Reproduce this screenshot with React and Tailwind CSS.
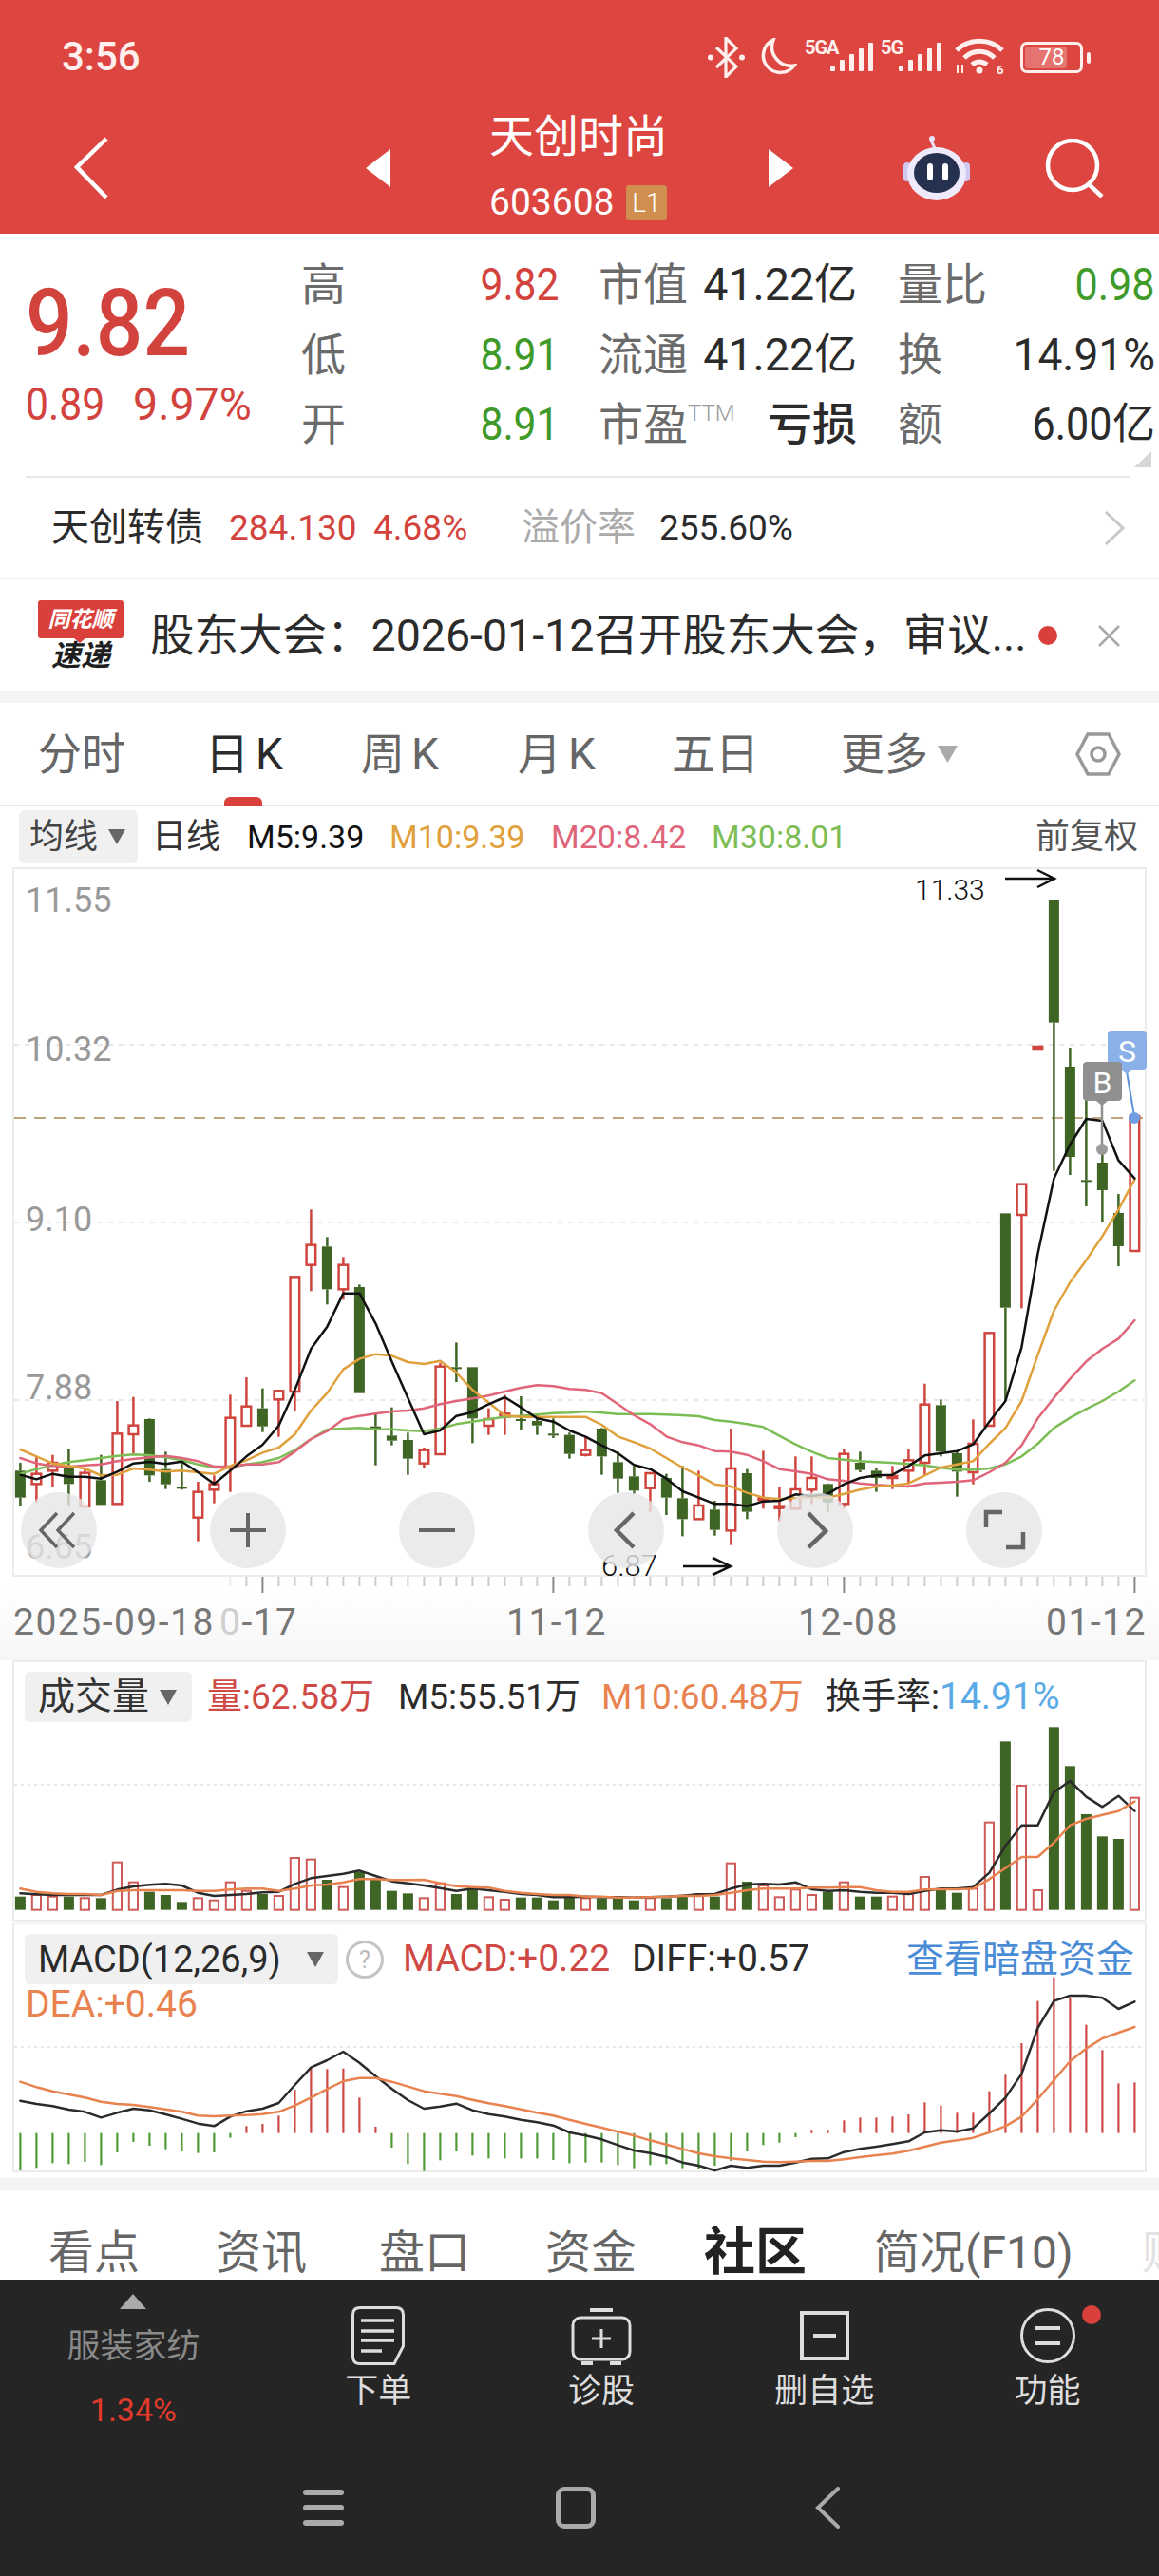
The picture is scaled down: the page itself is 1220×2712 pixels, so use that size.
import React from 'react';

const cx = (i) => 21.4 + 17 * i;
const kY = (z) => 1200 + z / 3;
const volY = (z) => 1740 + z / 3;
const macdY = (z) => 2020 + z / 3;
const pts = (arr, toY) => arr.map((z, i) => `${cx(i)},${toY(z)}`).join(' ');

const RED = '#d0443e';
const GREEN = '#3f6525';

// type, wick top, body top, body bottom, wick bottom
const candles = [
  ['g', 1020, 1045, 1130, 1155], ['r', 1000, 1055, 1087, 1145], ['r', 995, 1020, 1045, 1095], ['g', 975, 1035, 1087, 1155],
  ['r', 1040, 1052, 1158, 1158], ['g', 995, 1075, 1153, 1153], ['r', 825, 928, 1150, 1150], ['r', 812, 902, 930, 990],
  ['g', 880, 882, 1060, 1080], ['g', 985, 1040, 1088, 1103], ['g', 1020, 1096, 1100, 1105], ['r', 1080, 1112, 1193, 1268],
  ['r', 1060, 1088, 1105, 1148], ['r', 805, 878, 1035, 1112], ['r', 750, 842, 903, 903], ['g', 785, 848, 905, 923],
  ['r', 790, 793, 820, 938], ['r', 433, 433, 795, 855], ['r', 220, 332, 395, 478], ['g', 307, 337, 472, 520],
  ['r', 370, 395, 472, 505], ['g', 457, 465, 800, 800], ['g', 862, 905, 915, 1028], ['g', 845, 934, 950, 965],
  ['g', 925, 948, 1007, 1058], ['r', 972, 980, 1022, 1035], ['r', 705, 716, 993, 993], ['g', 640, 718, 722, 765],
  ['g', 718, 718, 880, 958], ['r', 848, 882, 903, 932], ['r', 805, 865, 875, 932], ['g', 810, 882, 887, 915],
  ['g', 865, 888, 902, 932], ['g', 880, 928, 934, 942], ['g', 925, 932, 992, 1007], ['r', 935, 980, 995, 1000],
  ['g', 910, 912, 1000, 1058], ['g', 985, 1018, 1070, 1115], ['g', 1030, 1063, 1108, 1120], ['r', 1050, 1053, 1100, 1175],
  ['g', 1055, 1068, 1130, 1185], ['g', 1030, 1132, 1198, 1252], ['r', 1045, 1155, 1198, 1198], ['g', 1140, 1168, 1232, 1250],
  ['r', 912, 1038, 1234, 1280], ['g', 1040, 1053, 1175, 1198], ['r', 982, 1132, 1136, 1165], ['r', 1095, 1157, 1163, 1205],
  ['r', 1000, 1104, 1165, 1165], ['r', 1000, 1068, 1105, 1150], ['g', 1085, 1087, 1145, 1175], ['r', 975, 992, 1150, 1165],
  ['g', 985, 1020, 1043, 1050], ['g', 1035, 1045, 1068, 1112], ['r', 1030, 1062, 1066, 1103], ['r', 975, 1012, 1045, 1090],
  ['r', 770, 836, 1020, 1060], ['g', 820, 838, 985, 1000], ['g', 985, 990, 1048, 1127], ['r', 883, 960, 1050, 1088],
  ['r', 610, 610, 903, 903], ['g', 232, 232, 530, 825], ['r', 140, 140, 237, 532], ['r', -294, -294, -288, -288],
  ['g', -759, -759, -370, 98], ['g', -291, -231, 54, 111], ['g', -126, 127, 131, 210], ['g', 30, 72, 159, 261],
  ['g', 171, 231, 336, 399], ['r', -75, -75, 351, 351],
];

const m5 = [1058, 1072, 1055, 1064, 1064, 1070, 1048, 1022, 1017, 1024, 1016, 1050, 1087, 1045, 1000, 963, 903, 790, 660, 590, 485, 485, 580, 700, 815, 930, 918, 872, 860, 835, 813, 845, 880, 890, 918, 938, 965, 990, 1027, 1040, 1070, 1110, 1130, 1150, 1150, 1157, 1142, 1140, 1120, 1125, 1118, 1088, 1068, 1060, 1058, 1030, 997, 990, 983, 962, 890, 825, 655, 360, 122, 15, -66, -60, 65, 122];
const m10 = [978, 1000, 1022, 1030, 1038, 1060, 1058, 1038, 1042, 1048, 1045, 1050, 1055, 1030, 1012, 988, 972, 930, 855, 800, 725, 692, 677, 682, 702, 708, 698, 735, 790, 830, 870, 875, 875, 875, 875, 875, 900, 937, 955, 975, 1005, 1035, 1060, 1088, 1095, 1115, 1130, 1135, 1132, 1128, 1130, 1118, 1105, 1095, 1092, 1085, 1060, 1035, 1025, 1015, 960, 910, 825, 680, 540, 450, 380, 304, 220, 125];
const m20 = [1005, 1022, 1030, 1033, 1028, 1025, 1015, 1008, 1003, 998, 1005, 1015, 1032, 1032, 1025, 1025, 1018, 985, 945, 920, 883, 872, 865, 858, 855, 848, 835, 825, 817, 808, 795, 783, 775, 778, 787, 790, 800, 835, 870, 898, 937, 955, 965, 983, 985, 995, 1015, 1040, 1047, 1055, 1072, 1077, 1085, 1090, 1093, 1095, 1085, 1083, 1080, 1075, 1050, 1020, 965, 880, 815, 755, 700, 660, 628, 570];
const m30 = [1055, 1040, 1028, 1018, 1012, 1005, 998, 994, 996, 1003, 1012, 1025, 1035, 1035, 1025, 1018, 1005, 980, 945, 915, 912, 910, 914, 914, 918, 920, 912, 898, 890, 882, 875, 872, 868, 863, 862, 858, 862, 866, 866, 866, 868, 870, 873, 885, 890, 898, 907, 935, 962, 985, 1005, 1010, 1015, 1018, 1020, 1024, 1028, 1036, 1042, 1042, 1038, 1025, 1000, 960, 910, 878, 850, 825, 795, 760];

const vols = [770, 765, 770, 770, 775, 775, 662, 725, 755, 765, 787, 775, 782, 725, 752, 762, 768, 648, 653, 717, 740, 692, 712, 752, 760, 775, 728, 762, 740, 772, 780, 773, 773, 782, 770, 775, 775, 775, 782, 775, 775, 765, 762, 770, 665, 723, 735, 772, 748, 765, 755, 725, 770, 770, 770, 762, 708, 750, 758, 745, 536, 280, 420, 750, 235, 358, 510, 580, 588, 458];
const volM5 = [760, 763, 765, 765, 765, 765, 748, 738, 733, 730, 735, 758, 768, 765, 762, 757, 755, 730, 712, 705, 698, 688, 705, 722, 728, 735, 743, 752, 745, 750, 755, 762, 765, 772, 772, 770, 772, 772, 773, 772, 770, 767, 763, 762, 745, 732, 730, 732, 725, 747, 752, 750, 755, 758, 758, 762, 752, 745, 745, 740, 695, 610, 545, 545, 440, 405, 455, 487, 452, 500];
const volM10 = [745, 755, 760, 762, 762, 765, 752, 750, 750, 750, 750, 752, 752, 748, 745, 745, 752, 745, 735, 732, 725, 715, 715, 718, 718, 717, 728, 737, 740, 742, 752, 758, 762, 765, 765, 770, 770, 773, 773, 772, 770, 768, 768, 765, 758, 750, 745, 745, 745, 742, 742, 740, 740, 750, 755, 755, 748, 747, 747, 745, 715, 680, 645, 645, 600, 545, 525, 512, 500, 470];

const macdBars = [795, 787, 772, 775, 768, 778, 738, 705, 717, 728, 735, 740, 738, 692, 655, 648, 622, 540, 473, 475, 473, 565, 657, 723, 775, 797, 763, 735, 748, 757, 757, 757, 757, 762, 772, 770, 770, 778, 788, 778, 775, 788, 790, 780, 765, 735, 715, 707, 690, 667, 667, 637, 628, 628, 625, 618, 580, 590, 613, 613, 545, 493, 393, 260, 185, 250, 335, 415, 520, 517];
const diff = [575, 585, 592, 603, 610, 628, 613, 600, 605, 618, 632, 647, 655, 625, 608, 600, 582, 525, 470, 447, 420, 455, 497, 537, 573, 600, 593, 584, 605, 617, 625, 635, 643, 653, 675, 685, 697, 715, 732, 740, 752, 770, 780, 795, 780, 787, 780, 780, 770, 758, 757, 737, 727, 720, 712, 703, 675, 668, 672, 662, 615, 565, 490, 345, 260, 243, 243, 250, 285, 262];
const dea = [515, 532, 545, 555, 565, 578, 585, 588, 595, 602, 610, 622, 624, 622, 620, 617, 610, 590, 565, 538, 513, 503, 503, 515, 530, 545, 553, 560, 572, 583, 592, 602, 613, 622, 635, 648, 660, 673, 685, 700, 713, 727, 741, 750, 757, 762, 767, 769, 767, 765, 765, 760, 753, 747, 742, 733, 720, 707, 700, 692, 675, 655, 625, 570, 510, 450, 410, 378, 360, 342];

const Line = ({ points, color, width = 2.5 }) => (
  <polyline points={points} fill="none" stroke={color} strokeWidth={width} strokeLinejoin="round" strokeLinecap="round" />
);

const KLineChart = () => (
  <svg width="1220" height="835" viewBox="0 913 1220 835" className="block">
    <defs>
      <linearGradient id="axisFade" x1="0" y1="0" x2="0" y2="1">
        <stop offset="0" stopColor="#ffffff" />
        <stop offset="1" stopColor="#f6f6f6" />
      </linearGradient>
    </defs>
    <rect x="0" y="1672" width="1220" height="76" fill="url(#axisFade)" />
    <rect x="14" y="914" width="1192" height="745" fill="#fff" stroke="#ececec" strokeWidth="2" />
    {[1100, 1287, 1474].map((y) => (
      <line key={y} x1="15" x2="1205" y1={y} y2={y} stroke="#e8e8e8" strokeWidth="2" strokeDasharray="5 6" />
    ))}
    <line x1="15" x2="1205" y1="1177" y2="1177" stroke="#bfa67e" strokeWidth="2" strokeDasharray="12 9" />

    <g fontSize="36" fill="#999999">
      <text x="27" y="960">11.55</text>
      <text x="27" y="1117">10.32</text>
      <text x="27" y="1296">9.10</text>
      <text x="27" y="1473">7.88</text>
      <text x="27" y="1641">6.65</text>
    </g>

    {candles.map(([type, wt, bt, bb, wb], i) => {
      const x = cx(i);
      const color = type === 'r' ? RED : GREEN;
      return (
        <g key={i}>
          {wt < bt && <line x1={x} x2={x} y1={kY(wt)} y2={kY(bt)} stroke={color} strokeWidth="2.5" />}
          {wb > bb && <line x1={x} x2={x} y1={kY(bb)} y2={kY(wb)} stroke={color} strokeWidth="2.5" />}
          {type === 'r' ? (
            <rect x={x - 4.8} y={kY(bt)} width="9.6" height={Math.max(kY(bb) - kY(bt), 2)} fill="#fff" stroke={color} strokeWidth="2.5" />
          ) : (
            <rect x={x - 5.5} y={kY(bt)} width="11" height={Math.max(kY(bb) - kY(bt), 2)} fill={color} />
          )}
        </g>
      );
    })}

    <Line points={pts(m30, kY)} color="#7cbd55" />
    <Line points={pts(m20, kY)} color="#e0657a" />
    <Line points={pts(m10, kY)} color="#e0a03c" />
    <Line points={pts(m5, kY)} color="#111111" />

    <text x="963" y="947" fontSize="30" fill="#111" fontWeight="300">11.33</text>
    <path d="M1058 925H1109M1092 916L1110 925L1092 934" fill="none" stroke="#111" strokeWidth="2.5" />
    <text x="633" y="1659" fontSize="31" fill="#111" fontWeight="300">6.87</text>
    <path d="M719 1649H768M750 1640L769 1649L750 1658" fill="none" stroke="#111" strokeWidth="2.5" />

    <line x1="1160" x2="1160" y1="1160" y2="1210" stroke="#8f8f8f" strokeWidth="2.5" />
    <circle cx="1160" cy="1210" r="6" fill="#9a9a9a" />
    <line x1="1186" x2="1194" y1="1128" y2="1175" stroke="#5f92dc" strokeWidth="2" />
    <circle cx="1194" cy="1177" r="6" fill="#6f9fe0" />
    <rect x="1166" y="1085" width="41" height="41" rx="4" fill="#8ab0ea" />
    <path d="M1180 1126h12l-6 5z" fill="#8ab0ea" />
    <text x="1186.5" y="1118" fontSize="32" fill="#fff" textAnchor="middle">S</text>
    <rect x="1140" y="1118" width="41" height="41" rx="4" fill="#8f8f8f" />
    <path d="M1154 1159h12l-6 5z" fill="#8f8f8f" />
    <text x="1160.5" y="1151" fontSize="32" fill="#fff" textAnchor="middle">B</text>

    {candles.map((_, i) => (i >= 13 ? (
      <line key={i} x1={cx(i)} x2={cx(i)} y1="1660" y2={[15, 33, 51, 69].includes(i) ? 1677 : 1670} stroke={[15, 33, 51, 69].includes(i) ? '#888' : i === 13 ? '#eee' : '#ccc'} strokeWidth="2" />
    ) : null))}

    <g fontSize="39" fill="#777777" letterSpacing="1.5">
      <text x="14" y="1721">2025-09-18</text>
      <text x="231" y="1721"><tspan fill="#cfcfcf">0</tspan>-17</text>
      <text x="533" y="1721">11-12</text>
      <text x="840" y="1721">12-08</text>
      <text x="1101" y="1721">01-12</text>
    </g>
  </svg>
);

const RoundBtn = ({ children }) => (
  <div className="w-[80px] h-[80px] rounded-full bg-[#e6e6e6]/80 flex items-center justify-center">
    <svg width="80" height="80" viewBox="0 0 80 80" fill="none" stroke="#666" strokeWidth="3.5">{children}</svg>
  </div>
);

const VolumeChart = () => (
  <svg width="1220" height="276" viewBox="0 1748 1220 276" className="absolute left-0 top-0">
    <rect x="14" y="1749" width="1192" height="273" fill="#fff" stroke="#ececec" strokeWidth="2" />
    <line x1="15" x2="1205" y1="1879" y2="1879" stroke="#e8e8e8" strokeWidth="2" strokeDasharray="3 4" />
    {vols.map((z, i) => (candles[i][0] === 'r' ? (
      <rect key={i} x={cx(i) - 4.6} y={volY(z)} width="9.2" height={volY(812) - volY(z)} fill="#fff" stroke="#cf5b58" strokeWidth="2" />
    ) : (
      <rect key={i} x={cx(i) - 5.5} y={volY(z)} width="11" height={volY(812) - volY(z)} fill={GREEN} />
    )))}
    <Line points={pts(volM5, volY)} color="#2b2b2b" />
    <Line points={pts(volM10, volY)} color="#e8824f" />
  </svg>
);

const MacdChart = () => (
  <svg width="1220" height="269" viewBox="0 2024 1220 269" className="absolute left-0 top-0">
    <rect x="14" y="2025" width="1192" height="261" fill="#fff" stroke="#ececec" strokeWidth="2" />
    <line x1="15" x2="1205" y1="2155" y2="2155" stroke="#e8e8e8" strokeWidth="2" strokeDasharray="3 4" />
    {macdBars.map((z, i) => (
      <line key={i} x1={cx(i)} x2={cx(i)} y1={macdY(677)} y2={macdY(z)} stroke={z > 677 ? '#4f9a35' : '#cf4a45'} strokeWidth="2.2" />
    ))}
    <Line points={pts(diff, macdY)} color="#2b2b2b" />
    <Line points={pts(dea, macdY)} color="#e8824f" />
  </svg>
);

const StatusIcons = () => (
  <div className="flex items-center text-[#fff0ee] mr-[80px]">
    <svg width="39" height="43" viewBox="0 0 39 43" fill="none" stroke="currentColor" strokeWidth="3.2">
      <path d="M9 11L30 31L19 42V1L30 12L9 32" />
      <circle cx="3" cy="21.5" r="3" fill="currentColor" stroke="none" />
      <circle cx="36" cy="21.5" r="3" fill="currentColor" stroke="none" />
    </svg>
    <svg width="40" height="40" viewBox="0 0 40 40" fill="none" stroke="currentColor" strokeWidth="3.5" className="ml-[15px]">
      <path d="M15 2A18 18 0 1 0 37 29A20 20 0 0 1 15 2Z" />
    </svg>
    <svg width="72" height="46" viewBox="0 0 72 46" fill="currentColor" className="ml-[8px]">
      <text x="0" y="20" fontSize="20" fontWeight="700" letterSpacing="-1">5GA</text>
      {[[27, 6], [37, 12], [47, 18], [57, 24], [67, 30]].map(([x, h]) => <rect key={x} x={x} y={38 - h} width="5" height={h} rx="1" />)}
    </svg>
    <svg width="64" height="46" viewBox="0 0 64 46" fill="currentColor" className="ml-[8px]">
      <text x="0" y="20" fontSize="20" fontWeight="700" letterSpacing="-1">5G</text>
      {[[19, 6], [29, 12], [39, 18], [49, 24], [59, 30]].map(([x, h]) => <rect key={x} x={x} y={38 - h} width="5" height={h} rx="1" />)}
    </svg>
    <svg width="54" height="40" viewBox="0 0 54 40" fill="none" stroke="currentColor" strokeWidth="5" className="ml-[13px]">
      <path d="M3 13C16 0 38 0 51 13" />
      <path d="M11 21C20 12 34 12 43 21" />
      <path d="M19 28C24 24 30 24 35 28" />
      <circle cx="27" cy="34" r="3.5" fill="currentColor" stroke="none" />
      <path d="M4 28v9M9 28v9" strokeWidth="2" />
      <text x="45" y="38" fontSize="13" fontWeight="700" fill="currentColor" stroke="none">6</text>
    </svg>
    <div className="relative ml-[16px] w-[66px] h-[33px] rounded-[7px] border-[3px] border-[#fff0ee] p-[2px]">
      <div className="h-full w-[78%] rounded-[3px] bg-white/25" />
      <span className="absolute inset-0 flex items-center justify-center text-[24px] leading-none text-white">78</span>
      <div className="absolute right-[-11px] top-[8px] w-[4px] h-[12px] rounded-full bg-[#fff0ee]" />
    </div>
  </div>
);

// digits in the reference are a condensed face: taller than they are wide
const Digits = ({ className, children }) => (
  <span className={`inline-block text-[49px] leading-none whitespace-nowrap origin-right ${className}`}>{children}</span>
);

const QuoteRow = ({ a, aVal, aColor, b, bVal, c, cVal }) => (
  <div className="flex items-center h-[73.5px] text-[47px] leading-none text-[#6b6b6b]">
    <div className="w-[272px] flex justify-between items-center">
      <span>{a}</span>
      <Digits className={`scale-x-[.87] ${aColor}`}>{aVal}</Digits>
    </div>
    <div className="ml-[41px] w-[272px] flex justify-between items-center">
      <span>{b}</span>
      {bVal}
    </div>
    <div className="ml-[43px] w-[271px] flex justify-between items-center">
      <span>{c}</span>
      {cVal}
    </div>
  </div>
);

const Yi = ({ value, scale }) => (
  <span className="flex items-center text-[#2b2b2b] whitespace-nowrap">
    <Digits className={scale}>{value}</Digits>
    <span className="text-[45px] leading-none">亿</span>
  </span>
);

const App = () => {
  return (
    <div className="w-[1220px] h-[2712px] overflow-hidden bg-white [font-family:Roboto,'Noto_Sans_CJK_SC',sans-serif]">
      {/* header */}
      <div className="h-[246px] bg-[#dd4541] text-white">
        <div className="h-[120px] flex items-center justify-between">
          <span className="ml-[65px] text-[42px] leading-none font-medium text-[#fff0ee]">3:56</span>
          <StatusIcons />
        </div>
        <div className="h-[114px] flex items-center">
          <svg width="36" height="66" viewBox="0 0 36 66" fill="none" stroke="#fff" strokeWidth="4.5" className="ml-[78px]">
            <path d="M34 2L3 32L34 64" />
          </svg>
          <svg width="26" height="40" viewBox="0 0 26 40" fill="#fff" className="ml-[271px]"><path d="M26 0V40L0 20Z" /></svg>
          <div className="ml-[104px] w-[187px] flex flex-col">
            <span className="text-[47px] leading-[48px] whitespace-nowrap">天创时尚</span>
            <div className="mt-[25px] h-[41px] flex items-center justify-between">
              <span className="text-[39px] leading-none">603608</span>
              <span className="w-[43px] h-[37px] rounded-[3px] bg-[#d18f4f] flex items-center justify-center text-[28px] leading-none font-light">L1</span>
            </div>
          </div>
          <svg width="26" height="40" viewBox="0 0 26 40" fill="#fff" className="ml-[107px]"><path d="M0 0V40L26 20Z" /></svg>
          <svg width="72" height="68" viewBox="0 0 72 68" className="ml-[115px]">
            <path d="M34 14C33 9 30 7 30 3" fill="none" stroke="#e8e4f8" strokeWidth="3" />
            <circle cx="31" cy="3" r="3" fill="#e8e4f8" />
            <rect x="1" y="28" width="8" height="20" rx="4" fill="#cfc8f0" />
            <rect x="63" y="28" width="8" height="20" rx="4" fill="#cfc8f0" />
            <ellipse cx="36" cy="40" rx="31" ry="28" fill="#eeeafb" />
            <ellipse cx="36" cy="39" rx="24" ry="21" fill="#26304f" />
            <rect x="26" y="29" width="6" height="18" rx="3" fill="#fff" />
            <rect x="42" y="29" width="6" height="18" rx="3" fill="#fff" />
          </svg>
          <svg width="62" height="62" viewBox="0 0 62 62" fill="none" stroke="#fff" strokeWidth="4.5" className="ml-[78px]">
            <circle cx="29" cy="28" r="26" />
            <path d="M46 48L60 61" />
          </svg>
        </div>
      </div>

      {/* quote */}
      <div className="relative h-[255px] flex">
        <div className="w-[317px] pl-[27px] pt-[46px] text-[#d3433e]">
          <div className="text-[98px] leading-[98px] font-medium origin-left scale-x-[.89] whitespace-nowrap">9.82</div>
          <div className="mt-[12px] flex text-[48px] leading-none">
            <span className="w-[113px] origin-left scale-x-[.89]">0.89</span>
            <span className="origin-left scale-x-[.97]">9.97%</span>
          </div>
        </div>
        <div className="pt-[17px]">
          <QuoteRow a="高" aVal="9.82" aColor="text-[#d3433e]" b="市值" bVal={<Yi value="41.22" scale="scale-x-[.95]" />} c="量比" cVal={<Digits className="scale-x-[.88] text-[#3f9a2a]">0.98</Digits>} />
          <QuoteRow a="低" aVal="8.91" aColor="text-[#3f9a2a]" b="流通" bVal={<Yi value="41.22" scale="scale-x-[.95]" />} c="换" cVal={<Digits className="scale-x-[.94] text-[#2b2b2b]">14.91%</Digits>} />
          <QuoteRow
            a="开"
            aVal="8.91"
            aColor="text-[#3f9a2a]"
            b={<span className="flex items-start">市盈<span className="text-[24px] font-light text-[#999]">TTM</span></span>}
            bVal={<span className="text-[47px] font-medium text-[#2b2b2b]">亏损</span>}
            c="额"
            cVal={<Yi value="6.00" scale="scale-x-[.88]" />}
          />
        </div>
        <svg width="18" height="17" viewBox="0 0 18 17" fill="#d8d8d8" className="absolute left-[1194px] top-[229px]"><path d="M18 0V17H0Z" /></svg>
      </div>

      {/* convertible bond row */}
      <div className="mx-[27px] w-[1163px] h-[107px] border-t-2 border-[#e8e8e8] flex items-center text-[40px] leading-none">
        <span className="ml-[27px] w-[187px] text-[#2b2b2b] whitespace-nowrap">天创转债</span>
        <span className="w-[152px] text-[37px] text-[#d3433e]">284.130</span>
        <span className="w-[156px] text-[37px] text-[#d3433e]">4.68%</span>
        <span className="w-[145px] text-[#aaaaaa] whitespace-nowrap">溢价率</span>
        <span className="w-[467px] text-[37px] text-[#2b2b2b]">255.60%</span>
        <svg width="24" height="36" viewBox="0 0 24 36" fill="none" stroke="#c8c8c8" strokeWidth="3"><path d="M3 1L21 18L3 35" /></svg>
      </div>

      {/* news row */}
      <div className="h-[120px] flex items-center border-t-2 border-[#efefef] relative">
        <div className="ml-[40px] w-[90px] flex flex-col items-center">
          <div className="relative w-[90px] h-[40px] bg-[#d9403c] rounded-[3px] flex items-center justify-center text-[23px] leading-none font-bold italic text-white whitespace-nowrap">
            同花顺
            <div className="absolute left-[38px] top-[40px] w-0 h-0 border-x-[6px] border-x-transparent border-t-[5px] border-t-[#d9403c]" />
          </div>
          <div className="mt-[4px] text-[31px] leading-[30px] font-bold italic text-[#1f1f1f] whitespace-nowrap">速递</div>
        </div>
        <span className="ml-[28px] w-[935px] text-[46.500px] leading-none text-[#2b2b2b] whitespace-nowrap">股东大会：2026-01-12召开股东大会，审议...</span>
        <div className="w-[20px] h-[20px] rounded-full bg-[#d9403c]" />
        <svg width="23" height="23" viewBox="0 0 23 23" fill="none" stroke="#a8a8a8" strokeWidth="2.5" className="ml-[43px]"><path d="M1 1L22 22M22 1L1 22" /></svg>
      </div>

      <div className="h-[12px] bg-[#f4f4f4]" />

      {/* period tabs */}
      <div className="relative h-[109px] border-b-2 border-[#e6e6e6] flex items-center pl-[40px] text-[46px] leading-none text-[#666666]">
        <span className="w-[176px] whitespace-nowrap">分时</span>
        <span className="w-[164px] text-[#2b2b2b] flex gap-[7px]">日<span>K</span></span>
        <span className="w-[165px] flex gap-[7px]">周<span>K</span></span>
        <span className="w-[162px] flex gap-[7px]">月<span>K</span></span>
        <span className="w-[178px] whitespace-nowrap">五日</span>
        <span className="w-[102px] whitespace-nowrap">更多</span>
        <svg width="21" height="18" viewBox="0 0 21 18" fill="#aaaaaa"><path d="M0 0H21L10.5 18Z" /></svg>
        <svg width="48" height="46" viewBox="0 0 48 46" fill="none" stroke="#999" strokeWidth="3.5" className="ml-[124px]">
          <path d="M13 2H35L46 23L35 44H13L2 23Z" />
          <circle cx="24" cy="23" r="7" />
        </svg>
        <div className="absolute left-[236px] bottom-[-2px] w-[40px] h-[10px] rounded-t-[6px] bg-[#d9403c]" />
      </div>

      {/* MA legend */}
      <div className="h-[64px] flex items-center text-[34px] leading-none">
        <div className="ml-[20px] w-[125px] h-[56px] rounded-[6px] bg-[#f0f0f0] flex items-center pl-[11px] text-[36px] text-[#444]">
          <span className="w-[83px] whitespace-nowrap">均线</span>
          <svg width="18" height="16" viewBox="0 0 18 16" fill="#666"><path d="M0 0H18L9 16Z" /></svg>
        </div>
        <span className="ml-[15px] w-[100px] text-[36px] text-[#333] whitespace-nowrap">日线</span>
        <span className="w-[150px] text-[#111]">M5:9.39</span>
        <span className="w-[170px] text-[#e0a03c]">M10:9.39</span>
        <span className="w-[169px] text-[#e0657a]">M20:8.42</span>
        <span className="w-[341px] text-[#7cbd55]">M30:8.01</span>
        <span className="text-[36px] text-[#555] whitespace-nowrap">前复权</span>
      </div>

      {/* k line */}
      <div className="relative h-[835px]">
        <KLineChart />
        <div className="absolute left-[22px] top-[658px] flex gap-[119px]">
          <RoundBtn><path d="M38 22L21 40L38 58M56 22L39 40L56 58" /></RoundBtn>
          <RoundBtn><path d="M21 40H59M40 22V58" strokeWidth="4" /></RoundBtn>
          <RoundBtn><path d="M21 40H59" strokeWidth="4" /></RoundBtn>
          <RoundBtn><path d="M48 22L30 40L48 58" strokeWidth="4.5" /></RoundBtn>
          <RoundBtn><path d="M33 22L51 41L33 58" strokeWidth="4.5" /></RoundBtn>
          <RoundBtn><path d="M21 37V21H38M60 42V58H42" strokeWidth="4.5" /></RoundBtn>
        </div>
      </div>

      {/* volume */}
      <div className="relative h-[276px]">
        <VolumeChart />
        <div className="relative pt-[12px] flex items-center text-[37px] leading-none whitespace-nowrap">
          <div className="ml-[26px] w-[176px] h-[53px] rounded-[6px] bg-[#f0f0f0] flex items-center pl-[14px] text-[39px] text-[#333]">
            <span className="w-[128px]">成交量</span>
            <svg width="18" height="16" viewBox="0 0 18 16" fill="#666"><path d="M0 0H18L9 16Z" /></svg>
          </div>
          <span className="ml-[16px] w-[201px] text-[#cf4a45]">量:62.58万</span>
          <span className="w-[214px] text-[#2b2b2b]">M5:55.51万</span>
          <span className="w-[236px] text-[#e8824f]">M10:60.48万</span>
          <span className="text-[#2b2b2b]">换手率:</span>
          <span className="text-[39px] text-[#5aaae6]">14.91%</span>
        </div>
      </div>

      {/* macd */}
      <div className="relative h-[269px]">
        <MacdChart />
        <div className="relative pt-[12px] flex items-center text-[39px] leading-none whitespace-nowrap">
          <div className="ml-[26px] w-[330px] h-[53px] rounded-[6px] bg-[#f0f0f0] flex items-center pl-[14px] text-[#2b2b2b]">
            <span className="w-[283px] text-[38px]">MACD(12,26,9)</span>
            <svg width="18" height="16" viewBox="0 0 18 16" fill="#666"><path d="M0 0H18L9 16Z" /></svg>
          </div>
          <div className="ml-[8px] w-[40px] h-[40px] rounded-full border-[3px] border-[#c4c4c4] flex items-center justify-center text-[26px] text-[#bbbbbb]">?</div>
          <span className="ml-[20px] w-[241px] text-[#cf4a45]">MACD:+0.22</span>
          <span className="w-[289px] text-[#2b2b2b]">DIFF:+0.57</span>
          <span className="text-[40px] text-[#4a8bd6]">查看暗盘资金</span>
        </div>
        <div className="relative ml-[27px] mt-[1px] text-[39px] leading-[40px] text-[#e8824f]">DEA:+0.46</div>
      </div>

      <div className="h-[13px] bg-[#f4f4f4]" />

      {/* content tabs */}
      <div className="h-[94px] pt-[38px] flex items-center pl-[51px] text-[48px] leading-none text-[#666666] whitespace-nowrap">
        <span className="w-[176px] shrink-0">看点</span>
        <span className="w-[172px] shrink-0">资讯</span>
        <span className="w-[175px] shrink-0">盘口</span>
        <span className="w-[167px] shrink-0">资金</span>
        <span className="w-[179px] shrink-0 text-[54px] font-bold text-[#222222]">社区</span>
        <span className="w-[282px] shrink-0">简况(F10)</span>
        <span className="shrink-0 text-[#e2e2e2]">财务</span>
      </div>

      {/* bottom bar */}
      <div className="h-[312px] bg-[#252525]">
        <div className="h-[200px] flex">
          <div className="w-[281px] pt-[15px] flex flex-col items-center">
            <svg width="28" height="16" viewBox="0 0 28 16" fill="#aaaaaa"><path d="M14 0L28 16H0Z" /></svg>
            <span className="mt-[20px] text-[35px] leading-[40px] text-[#8a8a8a]">服装家纺</span>
            <span className="mt-[26px] text-[34px] leading-[40px] text-[#e03a2a]">1.34%</span>
          </div>
          <div className="w-[235px] pt-[28px] flex flex-col items-center text-[35px] text-[#dddddd]">
            <svg width="56" height="62" viewBox="0 0 56 62" fill="none" stroke="#dddddd" strokeWidth="3">
              <path d="M9 1.5H47Q54.500 1.500 54.500 9V42L45 60.500H9Q1.500 60.500 1.500 53V9Q1.500 1.500 9 1.500Z" />
              <path d="M10 15H45M10 26H45M10 36H45M10 47H32" strokeWidth="3.500" />
            </svg>
            <span className="mt-[8px] leading-[40px]">下单</span>
          </div>
          <div className="w-[235px] pt-[28px] flex flex-col items-center text-[35px] text-[#dddddd]">
            <svg width="64" height="62" viewBox="0 0 64 62" fill="none" stroke="#dddddd" strokeWidth="3">
              <path d="M20 4H44" strokeWidth="4" />
              <rect x="2" y="12" width="60" height="44" rx="8" />
              <path d="M32 24V44M22 34H42" />
              <path d="M11 60H23M41 60H53" strokeWidth="4" />
            </svg>
            <span className="mt-[8px] leading-[40px]">诊股</span>
          </div>
          <div className="w-[235px] pt-[28px] flex flex-col items-center text-[35px] text-[#dddddd]">
            <svg width="52" height="62" viewBox="0 0 52 62" fill="none" stroke="#dddddd" strokeWidth="4">
              <rect x="2" y="7" width="48" height="48" />
              <path d="M14 31H38" />
            </svg>
            <span className="mt-[8px] leading-[40px]">删自选</span>
          </div>
          <div className="relative w-[235px] pt-[28px] flex flex-col items-center text-[35px] text-[#dddddd]">
            <svg width="60" height="62" viewBox="0 0 60 62" fill="none" stroke="#dddddd" strokeWidth="3">
              <circle cx="30" cy="31" r="27.500" />
              <path d="M17 23H43M17 39H43" strokeWidth="4" />
            </svg>
            <span className="mt-[8px] leading-[40px]">功能</span>
            <div className="absolute left-[154px] top-[27px] w-[20px] h-[20px] rounded-full bg-[#d9403c]" />
          </div>
        </div>
        <div className="h-[80px] flex pl-[207px] items-center">
          <div className="w-[266px] flex justify-center">
            <div className="w-[43px] flex flex-col gap-[10px]">
              <div className="h-[6px] rounded-full bg-[#aaaaaa]" />
              <div className="h-[6px] rounded-full bg-[#aaaaaa]" />
              <div className="h-[6px] rounded-full bg-[#aaaaaa]" />
            </div>
          </div>
          <div className="w-[265px] flex justify-center">
            <div className="w-[42px] h-[44px] rounded-[9px] border-[5px] border-[#aaaaaa]" />
          </div>
          <div className="w-[265px] flex justify-center">
            <svg width="28" height="44" viewBox="0 0 28 44" fill="none" stroke="#aaaaaa" strokeWidth="4" strokeLinecap="round"><path d="M25 2L4 22L25 42" /></svg>
          </div>
        </div>
      </div>
    </div>
  );
};

export default App;
